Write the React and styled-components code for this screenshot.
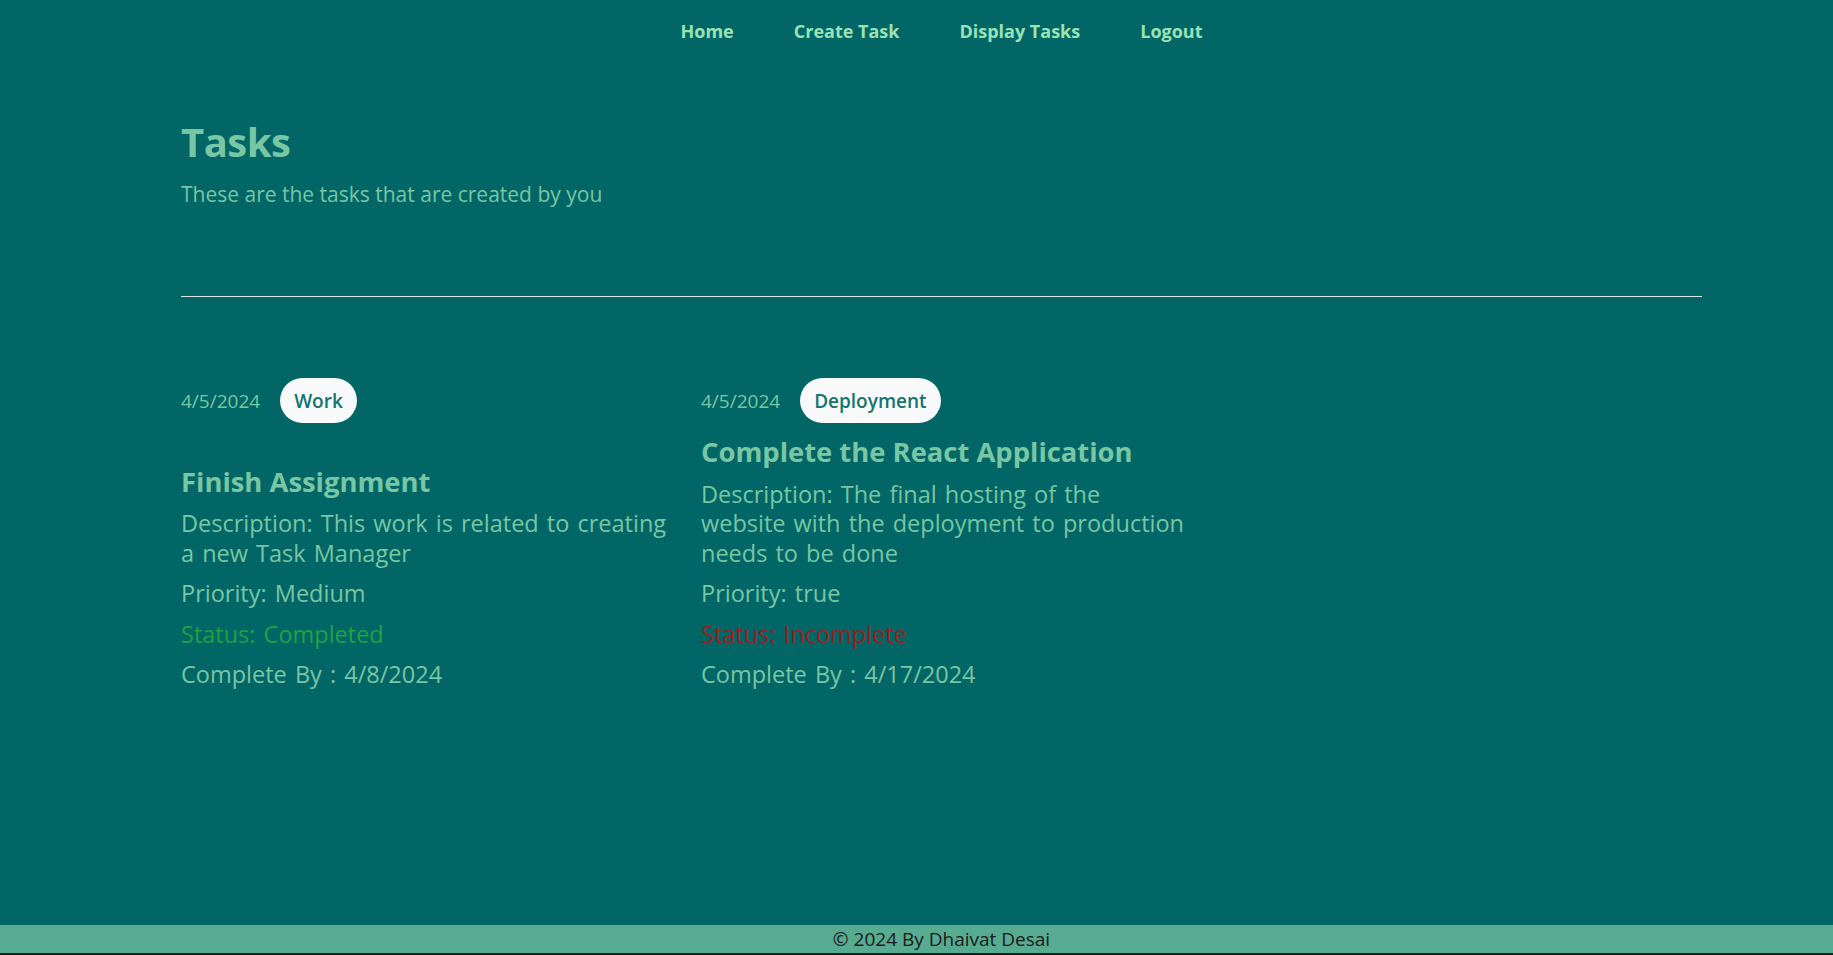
import React from 'react'
import styled, { createGlobalStyle } from 'styled-components'

const GlobalStyle = createGlobalStyle`
  * { box-sizing: border-box; }
  body {
    margin: 0;
    background: #036666;
    font-family: "Open Sans", "Noto Sans", sans-serif;
  }
`

const tasks = [
  {
    id: 1,
    createdOn: '4/5/2024',
    category: 'Work',
    title: 'Finish Assignment',
    description: 'This work is related to creating a new Task Manager',
    priority: 'Medium',
    completed: true,
    dueDate: '4/8/2024',
  },
  {
    id: 2,
    createdOn: '4/5/2024',
    category: 'Deployment',
    title: 'Complete the React Application',
    description: 'The final hosting of the website with the deployment to production needs to be done',
    priority: 'true',
    completed: false,
    dueDate: '4/17/2024',
  },
]

const App = () => {
  return <Page>
    <GlobalStyle />
    <Nav>
      <NavLink href="#">Home</NavLink>
      <NavLink href="#">Create Task</NavLink>
      <NavLink href="#">Display Tasks</NavLink>
      <NavLink href="#">Logout</NavLink>
    </Nav>

    <Main>
      <Heading>Tasks</Heading>
      <Subtitle>These are the tasks that are created by you</Subtitle>
      <Divider />

      <TaskGrid>
        {tasks.map((task) => (
          <TaskCard key={task.id}>
            <CardTop>
              <DateText>{task.createdOn}</DateText>
              <Badge>{task.category}</Badge>
            </CardTop>
            <CardBody>
              <TaskTitle>{task.title}</TaskTitle>
              <Line>Description: {task.description}</Line>
              <Line>Priority: {task.priority}</Line>
              <Line $status={task.completed ? 'done' : 'open'}>
                Status: {task.completed ? 'Completed' : 'Incomplete'}
              </Line>
              <Line>Complete By : {task.dueDate}</Line>
            </CardBody>
          </TaskCard>
        ))}
      </TaskGrid>
    </Main>

    <Footer>© 2024 By Dhaivat Desai</Footer>
  </Page>
}

const Page = styled.div`
  min-height: 100vh;
  display: flex;
  flex-direction: column;
`

const Nav = styled.nav`
  height: 62px;
  display: flex;
  align-items: center;
  justify-content: center;
  gap: 60px;
  padding-left: 50px;
`

const NavLink = styled.a`
  color: #99e2b4;
  font-weight: 700;
  font-size: 18px;
  text-decoration: none;
`

const Main = styled.main`
  flex: 1;
  padding: 52px 131px 0 181px;
`

const Heading = styled.h1`
  margin: 0;
  color: #78c6a3;
  font-size: 40px;
  font-weight: 700;
  letter-spacing: -0.5px;
`

const Subtitle = styled.p`
  margin: 11px 0 0;
  color: #78c6a3;
  font-size: 21px;
`

const Divider = styled.hr`
  margin: 88px 0 0;
  border: 0;
  border-top: 1px solid #dbe6e4;
`

const TaskGrid = styled.div`
  margin-top: 81px;
  display: grid;
  grid-template-columns: repeat(3, 491px);
  column-gap: 29px;
  align-items: stretch;
`

const TaskCard = styled.article`
  display: flex;
  flex-direction: column;
  justify-content: space-between;
`

const CardTop = styled.div`
  display: flex;
  align-items: center;
  gap: 20px;
`

const DateText = styled.span`
  color: #78c6a3;
  font-size: 19px;
`

const Badge = styled.span`
  height: 45px;
  display: inline-flex;
  align-items: center;
  padding: 0 14px;
  border-radius: 23px;
  background: #f8f9fa;
  color: #14746f;
  font-size: 19px;
  font-weight: 600;
`

const CardBody = styled.div`
  margin-top: 13px;
`

const TaskTitle = styled.h3`
  margin: 0 0 11px;
  color: #78c6a3;
  font-size: 27.4px;
  line-height: 1.2;
  font-weight: 700;
`

const Line = styled.p`
  margin: 0 0 11px;
  font-size: 23.5px;
  line-height: 29.5px;
  word-spacing: 2px;
  color: ${({ $status }) => ($status === 'done' ? '#1fa244' : $status === 'open' ? '#a01c1c' : '#78c6a3')};
`

const Footer = styled.footer`
  height: 30px;
  display: flex;
  align-items: center;
  justify-content: center;
  padding-left: 50px;
  background: #56ab91;
  border-bottom: 2px solid #1b1b1b;
  color: #1b1b1b;
  font-size: 19px;
`

export default App
